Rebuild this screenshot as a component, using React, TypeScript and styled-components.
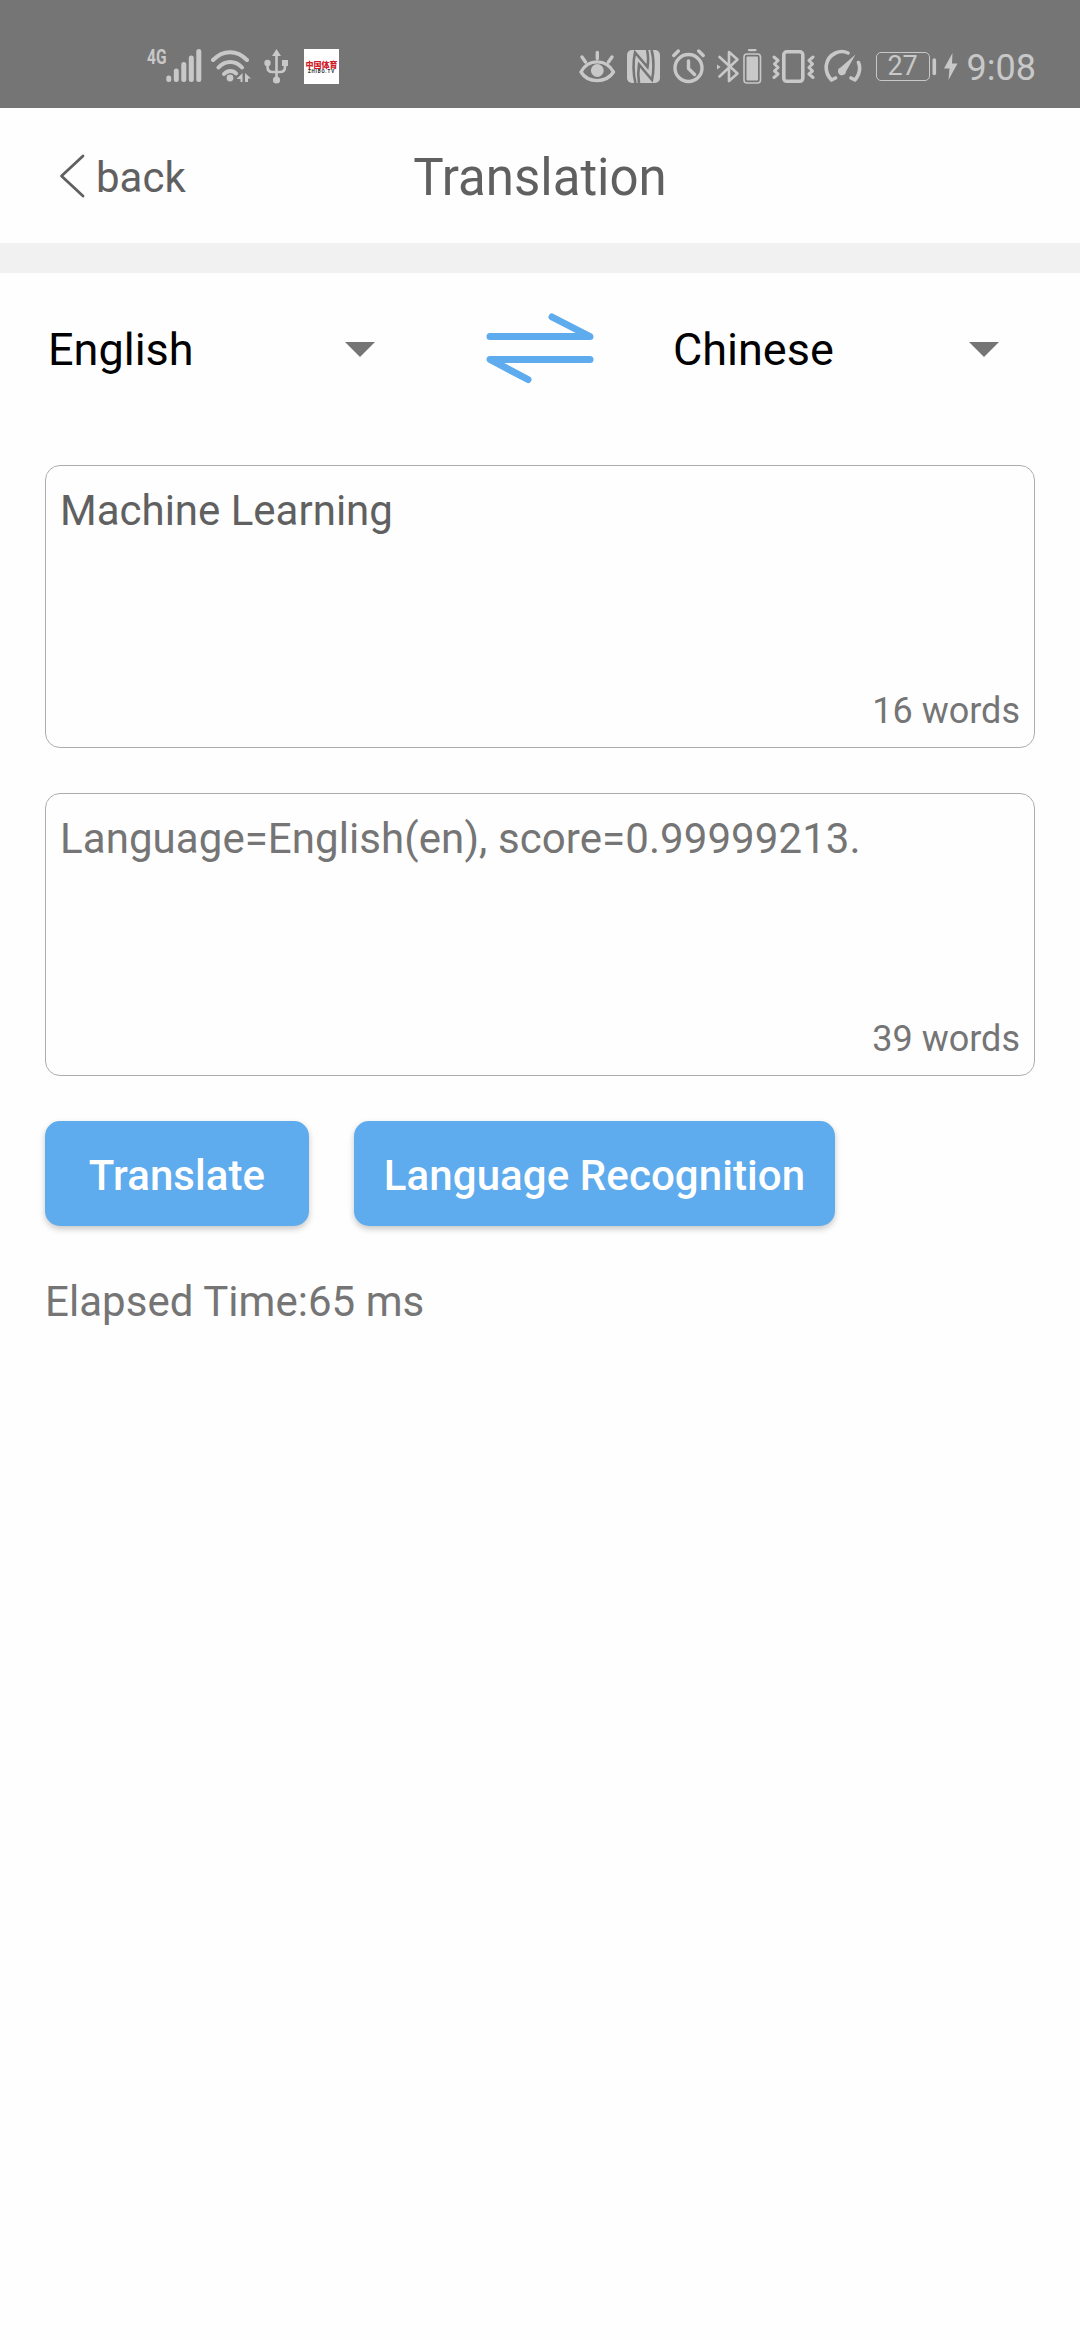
import React from 'react';
import styled, { createGlobalStyle } from 'styled-components';

const GlobalStyle = createGlobalStyle`
  * { box-sizing: border-box; }
  body { margin: 0; background: #fefefe; }
  button { font: inherit; border: 0; padding: 0; background: none; color: inherit; }
`;

const Screen = styled.div`
  width: 1080px;
  min-height: 2340px;
  background: #fefefe;
  font-family: Roboto, 'Noto Sans', sans-serif;
  color: #757575;
`;

const StatusBar = styled.header`
  display: flex;
  justify-content: space-between;
  height: 108px;
  padding: 48px 44px 0 147px;
  background: #757575;
  color: #c8c8c8;
`;

const StatusGroup = styled.div`
  display: flex;
  align-items: flex-start;
  height: 36px;
`;

const Glyph = styled.svg<{ $gap?: number }>`
  display: block;
  flex: none;
  margin-left: ${(p) => p.$gap ?? 0}px;
  fill: none;
  stroke: #c8c8c8;
  stroke-linecap: round;
  stroke-linejoin: round;
`;

const NetworkType = styled.span`
  width: 19px;
  font-size: 21px;
  line-height: 18px;
  font-weight: 700;
  white-space: nowrap;
  transform: scaleX(0.74);
  transform-origin: 0 0;
`;

const AppBadge = styled.div`
  display: flex;
  flex-direction: column;
  align-items: center;
  justify-content: center;
  width: 35px;
  height: 35px;
  margin: 1px 0 0 16px;
  background: #fff;
  white-space: nowrap;
`;

const BadgeName = styled.span`
  color: #d0202c;
  font: 900 8px/9px 'Noto Sans CJK SC', sans-serif;
`;

const BadgeSite = styled.span`
  color: #222;
  font: 700 4.5px/5px Roboto, sans-serif;
  letter-spacing: 0.9px;
`;

const BatteryLevel = styled.div`
  display: flex;
  align-items: center;
  justify-content: center;
  width: 54px;
  height: 29px;
  margin: 4px 0 0 14px;
  border: 1.5px solid #c8c8c8;
  border-radius: 5px;
  font-size: 27px;
  line-height: 27px;
`;

const Clock = styled.span`
  margin-left: 9px;
  font-size: 36px;
  line-height: 40px;
`;

const TitleBar = styled.nav`
  display: grid;
  grid-template-columns: 1fr auto 1fr;
  align-items: center;
  height: 135px;
  padding: 0 59px;
  color: #606060;
`;

const BackButton = styled.button`
  display: flex;
  align-items: center;
  gap: 11px;
  font-size: 42px;
  line-height: 50px;
`;

const BackLabel = styled.span`
  padding-top: 4px;
`;

const Title = styled.h1`
  margin: 4px 0 0;
  font-size: 51px;
  font-weight: 400;
  line-height: 60px;
`;

const Divider = styled.div`
  height: 30px;
  background: #f1f1f1;
`;

const Content = styled.main`
  display: flex;
  flex-direction: column;
  padding: 0 45px;
`;

const LanguageRow = styled.div`
  display: flex;
  align-items: center;
  height: 153px;
  margin-bottom: 39px;
`;

const LanguageSelect = styled.button<{ $width: number }>`
  display: flex;
  align-items: center;
  justify-content: space-between;
  width: ${(p) => p.$width}px;
  color: #000;
  font-size: 45px;
  line-height: 53px;
`;

const Caret = styled.svg`
  display: block;
  fill: #757575;
`;

const SwapButton = styled.button`
  margin: 0 78px 0 110px;
`;

const TextPanel = styled.section`
  display: flex;
  flex-direction: column;
  justify-content: space-between;
  height: 283px;
  margin-bottom: 45px;
  padding: 20px 14px 15px 14px;
  border: 1px solid #adadad;
  border-radius: 15px;
`;

const PanelText = styled.p<{ $strong?: boolean }>`
  margin: 0;
  color: ${(p) => (p.$strong ? '#606060' : '#757575')};
  font-size: 42px;
  line-height: 49px;
  letter-spacing: ${(p) => (p.$strong ? 0 : 0.08)}px;
`;

const WordCount = styled.span`
  align-self: flex-end;
  font-size: 36px;
  line-height: 42px;
`;

const Actions = styled.div`
  display: flex;
  gap: 45px;
`;

const ActionButton = styled.button<{ $width: number }>`
  width: ${(p) => p.$width}px;
  height: 105px;
  padding-top: 3px;
  border-radius: 15px;
  background: #5eabed;
  box-shadow: 0 3px 6px rgba(0, 0, 0, 0.22);
  color: #fff;
  font-size: 42px;
  font-weight: 500;
  letter-spacing: 0.08px;
  text-align: center;
  white-space: nowrap;
`;

const Elapsed = styled.p`
  margin: 51px 0 0;
  font-size: 42px;
  line-height: 49px;
  letter-spacing: 0.05px;
`;

const LanguageName = styled.span<{ $indent?: number }>`
  padding-left: ${(p) => p.$indent ?? 0}px;
`;

const solid = { fill: '#c8c8c8', stroke: 'none' };

function SignalIcon() {
  return (
    <Glyph width="36" height="36" strokeWidth="5">
      <path d="M2.8 30v1.5M10.3 23v8.5M17.8 16.500v15M25.300 10v21.500M32.800 3.500v28" />
    </Glyph>
  );
}

function WifiIcon() {
  return (
    <Glyph $gap={9} width="40" height="36" strokeWidth="4">
      <path d="M2 12C12 1.500 26 1.500 36 12M7.500 19.500C14 12 24.500 12 31 19.500M13 26C16.500 22 22 22 25 25.500" />
      <circle cx="19" cy="30" r="3.400" {...solid} />
      <path d="M31.500 25v9h-2v-3h-4zM34 25l6 5.500h-3V34h-3z" {...solid} />
    </Glyph>
  );
}

function UsbIcon() {
  return (
    <Glyph $gap={13} width="24" height="36" strokeWidth="2.600">
      <path d="M12.500 8v22M3.500 16v3q0 5 5 5h7.500q5 0 5-5v-3" />
      <path d="M12.500 1l4.500 7H8z" {...solid} />
      <circle cx="3.500" cy="15" r="3.200" {...solid} />
      <circle cx="12.500" cy="32" r="3.600" {...solid} />
      <path d="M18 12h6v6h-6z" {...solid} />
    </Glyph>
  );
}

function EyeIcon() {
  return (
    <Glyph width="37" height="36" strokeWidth="3.400">
      <path d="M2 24C9 10.500 27 10.500 34.500 24C27 35.500 9 35.500 2 24z" />
      <path d="M3 9l3.500 5M18.300 4.500v6M33 9l-3.500 5" />
      <circle cx="18.300" cy="22.500" r="6.400" {...solid} />
    </Glyph>
  );
}

function NfcIcon() {
  return (
    <Glyph $gap={11} width="33" height="36">
      <rect x="0" y="2" width="33" height="33" rx="5" {...solid} />
      <g stroke="#757575" strokeWidth="2.600" strokeLinecap="butt" strokeLinejoin="miter">
        <path d="M8.500 35C6 26 6 13 8 4.500L20.500 19Q22 10 20 2" />
        <path d="M24.500 2C27 10 27 23 25 32L12 16.500Q10.500 26 12 35" />
      </g>
    </Glyph>
  );
}

function AlarmIcon() {
  return (
    <Glyph $gap={12} width="33" height="36" strokeWidth="3.400">
      <circle cx="16.500" cy="20" r="13.500" />
      <path d="M16.500 13v7.500l6 6M1.800 7.500l4.500-4.500M31.200 7.500L26.700 3" />
    </Glyph>
  );
}

function BluetoothIcon() {
  return (
    <Glyph $gap={11} width="46" height="36" strokeWidth="2.600">
      <path d="M3.500 9l18 16.500-8.500 7.500V4l8.500 7.500L3.500 28.500" />
      <path d="M1 16.500l3.500 2.500L1 21.500z" {...solid} />
      <rect x="28" y="6" width="16.500" height="29" rx="3" strokeWidth="1.600" />
      <rect x="30.500" y="8.500" width="11.500" height="24" rx="1" {...solid} />
      <path d="M33 2.200h6.500" strokeWidth="2.200" />
    </Glyph>
  );
}

function VibrateIcon() {
  return (
    <Glyph $gap={10} width="43" height="36" strokeWidth="3">
      <rect x="11.800" y="3.800" width="19" height="29.500" rx="3" strokeWidth="3.600" />
      <path d="M2 9l4 3.500-3.500 3.500L6 19.500 2.500 23 6 26 2 29.500M41 9l-4 3.500 3.500 3.500L37 19.500l3.500 3.500-3.500 3L41 29.500" />
    </Glyph>
  );
}

function GaugeIcon() {
  return (
    <Glyph $gap={9} width="38" height="36" strokeWidth="3.600">
      <path d="M11.500 30L7.500 32C-1 23 1 10 11.500 5Q18 2 24 5M34.500 14.500Q38 23 31 32l-4-2" />
      <path d="M31.500 6.500L22 23.500a4 4 0 1 1-5.500-4z" {...solid} />
    </Glyph>
  );
}

function BatteryTipIcon() {
  return (
    <Glyph $gap={2} width="5" height="36" strokeWidth="3.600">
      <path d="M2.300 12v13.500" />
    </Glyph>
  );
}

function BoltIcon() {
  return (
    <Glyph $gap={7} width="14" height="36">
      <path d="M8.500 5L0 20.500h5.500L4.500 32 13.500 15.500H8z" {...solid} />
    </Glyph>
  );
}

function DropCaret() {
  return (
    <Caret width="30" height="15">
      <path d="M0 0h30L15 15z" />
    </Caret>
  );
}

export default function App() {
  return (
    <Screen>
      <GlobalStyle />
      <StatusBar>
        <StatusGroup>
          <NetworkType>4G</NetworkType>
          <SignalIcon />
          <WifiIcon />
          <UsbIcon />
          <AppBadge>
            <BadgeName>中国体育</BadgeName>
            <BadgeSite>ZHIBO.TV</BadgeSite>
          </AppBadge>
        </StatusGroup>
        <StatusGroup>
          <EyeIcon />
          <NfcIcon />
          <AlarmIcon />
          <BluetoothIcon />
          <VibrateIcon />
          <GaugeIcon />
          <BatteryLevel>27</BatteryLevel>
          <BatteryTipIcon />
          <BoltIcon />
          <Clock>9:08</Clock>
        </StatusGroup>
      </StatusBar>

      <TitleBar>
        <BackButton>
          <svg width="26" height="44" fill="none" stroke="#606060" strokeWidth="2.800" strokeLinecap="round" strokeLinejoin="round">
            <path d="M24 2L2.500 22 24 42" />
          </svg>
          <BackLabel>back</BackLabel>
        </BackButton>
        <Title>Translation</Title>
      </TitleBar>
      <Divider />

      <Content>
        <LanguageRow>
          <LanguageSelect $width={330}>
            <LanguageName $indent={3}>English</LanguageName>
            <DropCaret />
          </LanguageSelect>
          <SwapButton aria-label="Swap languages">
            <svg width="110" height="72" fill="none" stroke="#5eabed" strokeWidth="7" strokeLinecap="round" strokeLinejoin="round">
              <path d="M5 24.500h100L67 5M105 47.500H5l38 20" />
            </svg>
          </SwapButton>
          <LanguageSelect $width={326}>
            <LanguageName>Chinese</LanguageName>
            <DropCaret />
          </LanguageSelect>
        </LanguageRow>

        <TextPanel>
          <PanelText $strong>Machine Learning</PanelText>
          <WordCount>16 words</WordCount>
        </TextPanel>
        <TextPanel>
          <PanelText>Language=English(en), score=0.99999213.</PanelText>
          <WordCount>39 words</WordCount>
        </TextPanel>

        <Actions>
          <ActionButton $width={264}>Translate</ActionButton>
          <ActionButton $width={481}>Language Recognition</ActionButton>
        </Actions>
        <Elapsed>Elapsed Time:65 ms</Elapsed>
      </Content>
    </Screen>
  );
}
